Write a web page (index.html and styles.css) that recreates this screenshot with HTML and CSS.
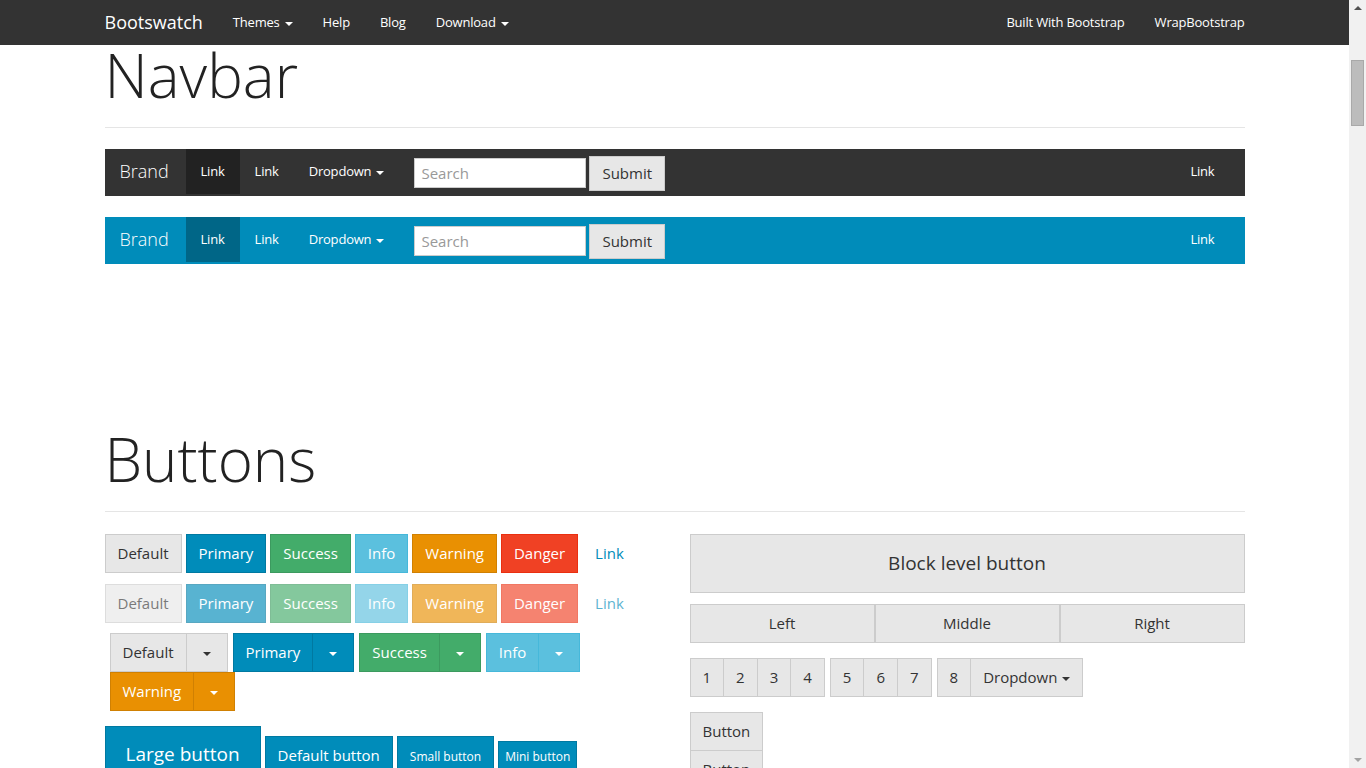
FILE: index.html
```html
<!DOCTYPE html>
<html lang="en">
<head>
<meta charset="utf-8">
<title>Bootswatch: Cosmo</title>
<link rel="stylesheet" href="styles.css">
</head>
<body>
<header class="topbar">
  <div class="container topbar-inner">
    <a class="topbar-brand" href="#">Bootswatch</a>
    <nav class="topbar-nav">
      <a href="#">Themes<span class="caret"></span></a>
      <a href="#">Help</a>
      <a href="#">Blog</a>
      <a href="#">Download<span class="caret"></span></a>
    </nav>
    <nav class="topbar-nav topbar-right">
      <a href="#">Built With Bootstrap</a>
      <a href="#">WrapBootstrap</a>
    </nav>
  </div>
</header>

<div class="scrollbar" aria-hidden="true">
  <span class="scroll-arrow scroll-up"></span>
  <span class="scroll-thumb"></span>
  <span class="scroll-arrow scroll-down"></span>
</div>

<main class="container page">
  <section class="docs-section">
    <div class="page-header"><h1>Navbar</h1></div>

    <div class="navbar navbar-dark">
      <a class="navbar-brand" href="#">Brand</a>
      <a class="nav-link active" href="#">Link</a>
      <a class="nav-link" href="#">Link</a>
      <a class="nav-link" href="#">Dropdown<span class="caret"></span></a>
      <form class="navbar-form">
        <input class="form-control" type="text" placeholder="Search">
        <button class="btn btn-default btn-form" type="button">Submit</button>
      </form>
      <a class="nav-link nav-right" href="#">Link</a>
    </div>

    <div class="navbar navbar-blue">
      <a class="navbar-brand" href="#">Brand</a>
      <a class="nav-link active" href="#">Link</a>
      <a class="nav-link" href="#">Link</a>
      <a class="nav-link" href="#">Dropdown<span class="caret"></span></a>
      <form class="navbar-form">
        <input class="form-control" type="text" placeholder="Search">
        <button class="btn btn-default btn-form" type="button">Submit</button>
      </form>
      <a class="nav-link nav-right" href="#">Link</a>
    </div>
  </section>

  <section class="docs-section buttons-section">
    <div class="page-header"><h1>Buttons</h1></div>

    <div class="row">
      <div class="col">
        <div class="btn-row row-first">
          <a class="btn btn-default" href="#">Default</a>
          <a class="btn btn-primary" href="#">Primary</a>
          <a class="btn btn-success" href="#">Success</a>
          <a class="btn btn-info" href="#">Info</a>
          <a class="btn btn-warning" href="#">Warning</a>
          <a class="btn btn-danger" href="#">Danger</a>
          <a class="btn btn-link" href="#">Link</a>
        </div>
        <div class="btn-row">
          <a class="btn btn-default disabled" href="#">Default</a>
          <a class="btn btn-primary disabled" href="#">Primary</a>
          <a class="btn btn-success disabled" href="#">Success</a>
          <a class="btn btn-info disabled" href="#">Info</a>
          <a class="btn btn-warning disabled" href="#">Warning</a>
          <a class="btn btn-danger disabled" href="#">Danger</a>
          <a class="btn btn-link disabled" href="#">Link</a>
        </div>
        <div class="btn-toolbar">
          <div class="btn-group">
            <a class="btn btn-default" href="#">Default</a>
            <a class="btn btn-default btn-toggle" href="#"><span class="caret"></span></a>
          </div>
          <div class="btn-group">
            <a class="btn btn-primary" href="#">Primary</a>
            <a class="btn btn-primary btn-toggle" href="#"><span class="caret"></span></a>
          </div>
          <div class="btn-group">
            <a class="btn btn-success" href="#">Success</a>
            <a class="btn btn-success btn-toggle" href="#"><span class="caret"></span></a>
          </div>
          <div class="btn-group">
            <a class="btn btn-info" href="#">Info</a>
            <a class="btn btn-info btn-toggle" href="#"><span class="caret"></span></a>
          </div>
          <div class="btn-group">
            <a class="btn btn-warning" href="#">Warning</a>
            <a class="btn btn-warning btn-toggle" href="#"><span class="caret"></span></a>
          </div>
        </div>
        <div class="btn-row btn-sizes">
          <a class="btn btn-primary btn-lg" href="#">Large button</a>
          <a class="btn btn-primary" href="#">Default button</a>
          <a class="btn btn-primary btn-sm" href="#">Small button</a>
          <a class="btn btn-primary btn-xs" href="#">Mini button</a>
        </div>
      </div>

      <div class="col">
        <a class="btn btn-default btn-lg btn-block" href="#">Block level button</a>
        <div class="btn-justified">
          <a class="btn btn-default" href="#">Left</a>
          <a class="btn btn-default" href="#">Middle</a>
          <a class="btn btn-default" href="#">Right</a>
        </div>
        <div class="btn-toolbar pager-toolbar">
          <div class="btn-group attached">
            <a class="btn btn-default" href="#">1</a>
            <a class="btn btn-default" href="#">2</a>
            <a class="btn btn-default" href="#">3</a>
            <a class="btn btn-default" href="#">4</a>
          </div>
          <div class="btn-group attached">
            <a class="btn btn-default" href="#">5</a>
            <a class="btn btn-default" href="#">6</a>
            <a class="btn btn-default" href="#">7</a>
          </div>
          <div class="btn-group attached">
            <a class="btn btn-default" href="#">8</a>
            <a class="btn btn-default" href="#">Dropdown<span class="caret"></span></a>
          </div>
        </div>
        <div class="btn-group-vertical">
          <a class="btn btn-default" href="#">Button</a>
          <a class="btn btn-default" href="#">Button</a>
          <a class="btn btn-default" href="#">Button</a>
          <a class="btn btn-default" href="#">Button</a>
        </div>
      </div>
    </div>
  </section>
</main>
</body>
</html>
```

FILE: styles.css
```css
* { box-sizing: border-box; }

html, body {
  margin: 0;
  padding: 0;
}

body {
  font-family: "Open Sans", "Liberation Sans", sans-serif;
  font-size: 15px;
  line-height: 1.428571;
  color: #222222;
  background: #ffffff;
  padding-right: 17px;
}

a { text-decoration: none; }

.container {
  width: 1140px;
  margin: 0 auto;
}

/* ---------- fixed top bar ---------- */
.topbar {
  position: fixed;
  top: 0;
  left: 0;
  right: 17px;
  height: 45px;
  background: #333333;
  z-index: 10;
}

.topbar-inner {
  display: flex;
  align-items: center;
  height: 45px;
}

.topbar-brand {
  font-size: 18px;
  color: #ffffff;
  padding-right: 15px;
  line-height: 45px;
}

.topbar-nav {
  display: flex;
}

.topbar-nav a {
  color: #ffffff;
  font-size: 13px;
  letter-spacing: -0.2px;
  line-height: 45px;
  padding: 0 15px;
}

.topbar-right {
  margin-left: auto;
  margin-right: -15px;
}

.caret {
  display: inline-block;
  width: 0;
  height: 0;
  margin-left: 5px;
  vertical-align: middle;
  border-top: 4px solid currentColor;
  border-left: 4px solid transparent;
  border-right: 4px solid transparent;
}

/* ---------- fake window scrollbar ---------- */
.scrollbar {
  position: fixed;
  top: 0;
  right: 0;
  width: 17px;
  height: 100%;
  background: #f1f1f1;
  z-index: 20;
}

.scroll-thumb {
  position: absolute;
  left: 2px;
  top: 60px;
  width: 13px;
  height: 66px;
  background: #bcbcbc;
  border: 1px solid #a9a9a9;
}

.scroll-arrow {
  position: absolute;
  left: 5px;
  width: 0;
  height: 0;
  border-left: 4px solid transparent;
  border-right: 4px solid transparent;
}

.scroll-up {
  top: 6px;
  border-bottom: 4px solid #505050;
}

.scroll-down {
  bottom: 6px;
  border-top: 4px solid #a3a3a3;
}

/* ---------- page ---------- */
.page {
  padding-top: 42px;
  padding-bottom: 200px;
}

.page-header {
  margin: 0 0 21px;
  padding-bottom: 9px;
  border-bottom: 1px solid #e5e5e5;
}

.page-header h1 {
  margin: 0 0 10px;
  font-size: 60px;
  font-weight: 300;
  line-height: 1.1;
  color: #222222;
}

.buttons-section {
  margin-top: 162px;
}

.buttons-section .page-header {
  margin-bottom: 22px;
}

/* ---------- demo navbars ---------- */
.navbar {
  display: flex;
  align-items: flex-start;
  height: 47px;
  margin-bottom: 21px;
}

.navbar-dark { background: #333333; }
.navbar-blue { background: #008cba; }

.navbar-brand {
  font-size: 18px;
  font-weight: 300;
  color: #ffffff;
  line-height: 45px;
  padding: 0 15px;
  min-width: 81px;
}

.nav-link {
  font-size: 13px;
  letter-spacing: -0.2px;
  line-height: 45px;
  height: 45px;
  padding: 0 15px;
  color: #ffffff;
}

.navbar-dark .nav-link.active { background: #222222; }
.navbar-blue .nav-link.active { background: #006687; }

.nav-right {
  margin-left: auto;
  margin-right: 15px;
}

.navbar-form {
  display: flex;
  align-items: flex-start;
  margin: 0 0 0 15px;
  padding-top: 7px;
}

.form-control {
  width: 172px;
  height: 30px;
  margin-top: 2px;
  padding: 0 6px;
  border: 1px solid #cccccc;
  background: #ffffff;
  font-family: inherit;
  font-size: 15px;
  color: #222222;
  outline: none;
}

.form-control::placeholder { color: #999999; }

/* ---------- buttons ---------- */
.btn {
  display: inline-block;
  padding: 8px 12px;
  font-family: inherit;
  font-size: 15px;
  line-height: 21px;
  text-align: center;
  white-space: nowrap;
  border: 1px solid transparent;
  cursor: pointer;
}

.btn-default { background: #e7e7e7; border-color: #cccccc; color: #333333; }
.btn-primary { background: #008cba; border-color: #0079a1; color: #ffffff; }
.btn-success { background: #43ac6a; border-color: #3c9a5f; color: #ffffff; }
.btn-info    { background: #5bc0de; border-color: #46b8da; color: #ffffff; }
.btn-warning { background: #e99002; border-color: #d08002; color: #ffffff; }
.btn-danger  { background: #f04124; border-color: #ea2f10; color: #ffffff; }
.btn-link    { background: transparent; color: #008cba; }

.btn.disabled { opacity: 0.65; }

.btn-form {
  height: 35px;
  margin-left: 3px;
  padding: 6px 12px;
}

.btn-lg {
  font-size: 19px;
  line-height: 25px;
  padding: 15px 20px;
}

.btn-sm {
  font-size: 12px;
  line-height: 18px;
  padding: 11px 12px;
}

.btn-xs {
  font-size: 12px;
  line-height: 18px;
  padding: 6px 6px;
}

.btn-block {
  display: block;
  width: 100%;
  padding: 16px 20px;
}

.row {
  display: grid;
  grid-template-columns: 1fr 1fr;
  column-gap: 30px;
}

.btn-row {
  display: flex;
  gap: 4px;
  margin-bottom: 10px;
}

.row-first { margin-bottom: 11px; }

.btn-sizes {
  align-items: baseline;
  margin-top: 15px;
}

.btn-toolbar {
  display: flex;
  flex-wrap: wrap;
  column-gap: 5px;
  padding-left: 5px;
}

.btn-group {
  display: flex;
}

.btn-group .btn + .btn { margin-left: -1px; }

.btn-toggle {
  padding-left: 16px;
  padding-right: 16px;
}

.btn-toggle .caret { margin-left: 0; }

.btn-justified {
  display: flex;
  margin-top: 11px;
}

.btn-justified .btn { flex: 1; }

.pager-toolbar {
  margin-top: 15px;
  padding-left: 0;
}

.btn-group-vertical {
  display: inline-flex;
  flex-direction: column;
  margin-top: 15px;
}

.btn-group-vertical .btn + .btn { margin-top: -1px; }
```
